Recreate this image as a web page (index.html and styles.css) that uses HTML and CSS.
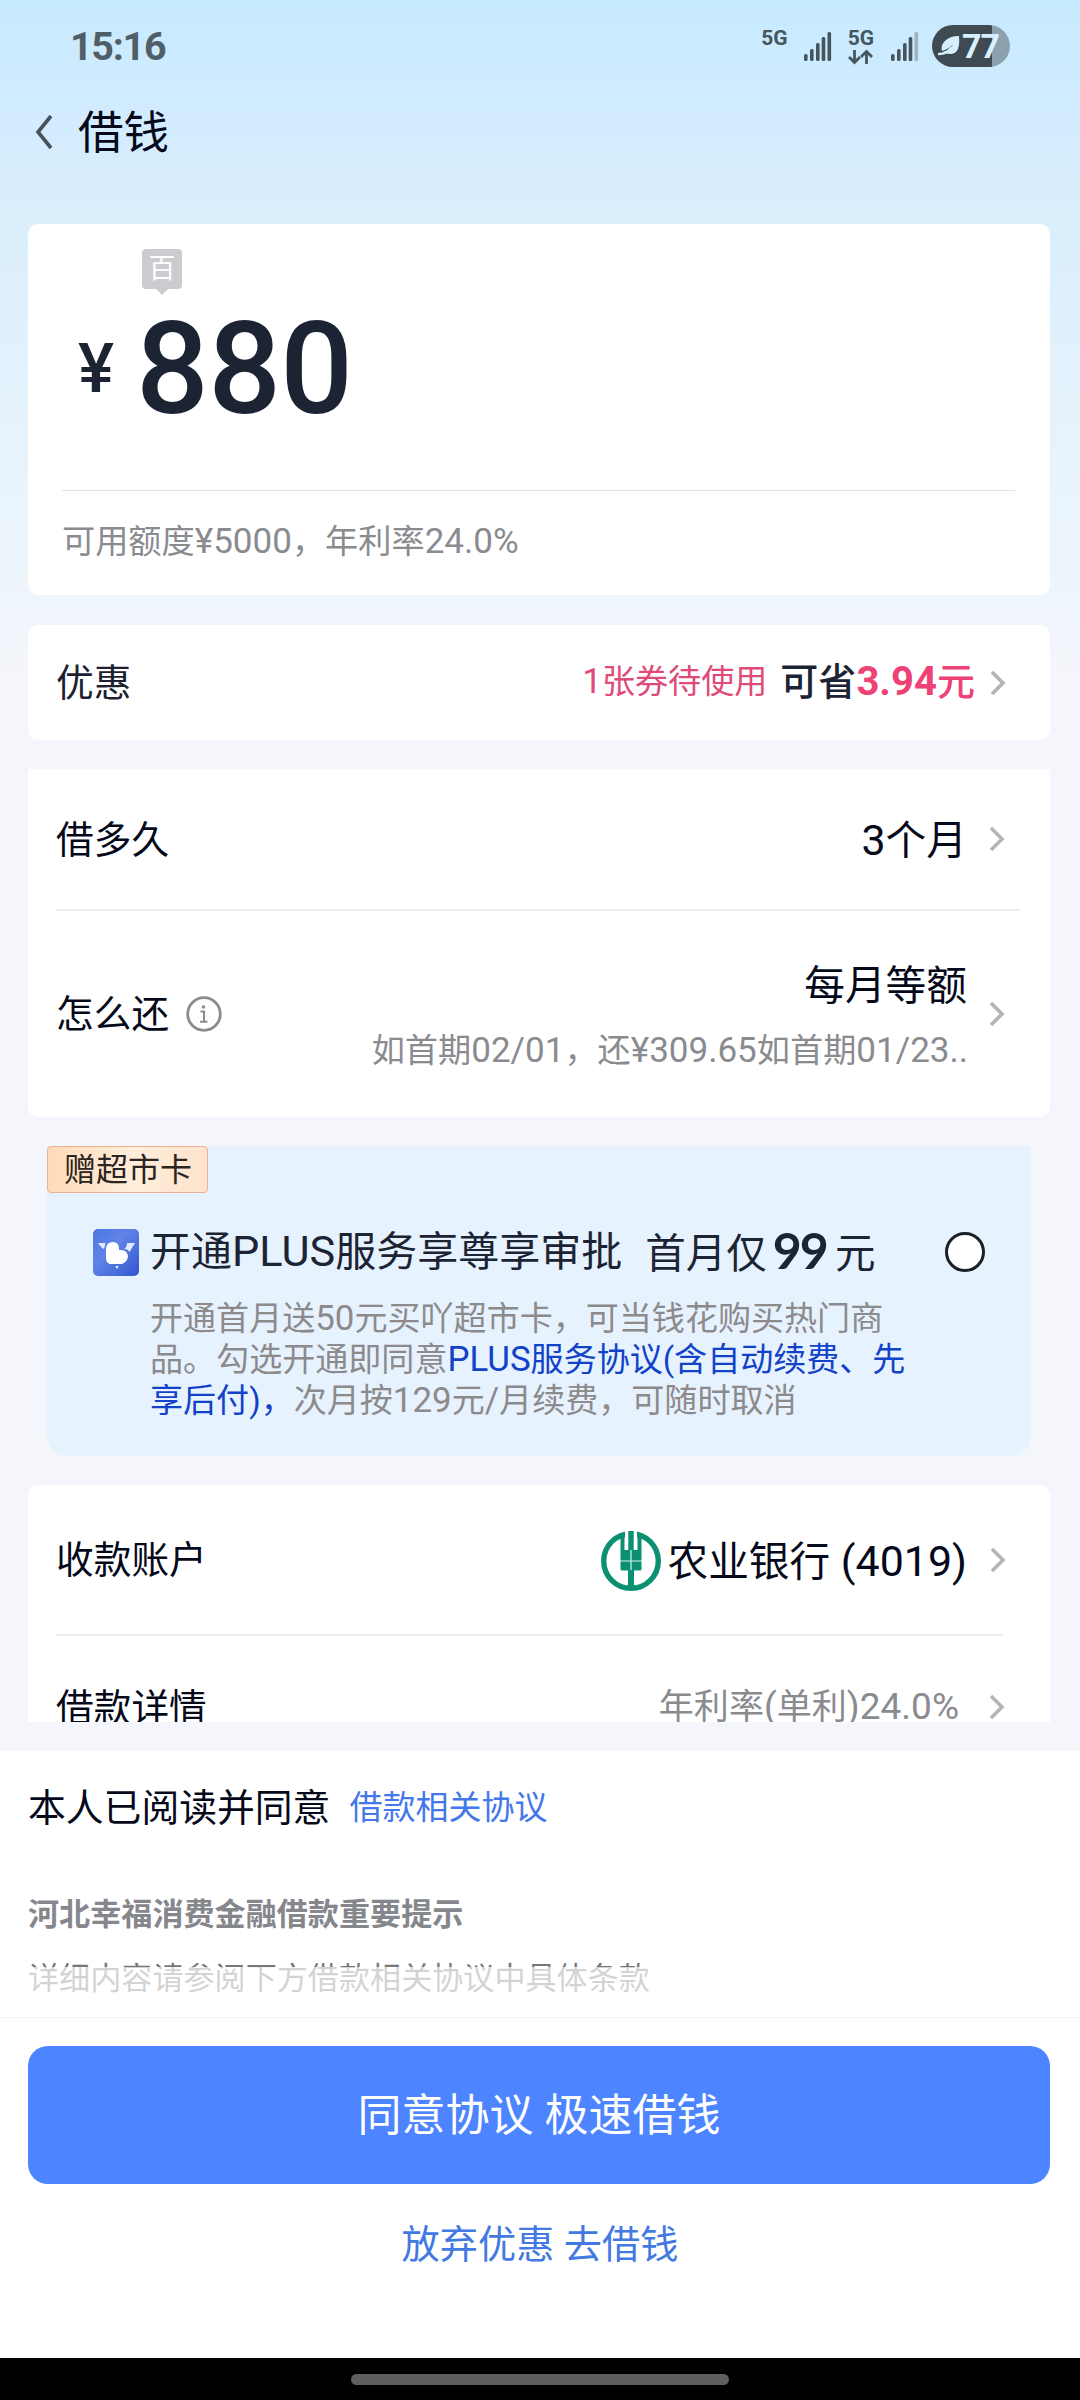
FILE: index.html
```html
<!DOCTYPE html>
<html lang="zh-CN">
<head>
<meta charset="utf-8">
<title>借钱</title>
<link rel="stylesheet" href="styles.css">
</head>
<body>
<svg class="defs" width="0" height="0" aria-hidden="true">
  <symbol id="chevron" viewBox="0 0 16 28"><path d="M2 3 L13 14 L2 25" fill="none" stroke="#b5b5b8" stroke-width="3.6"/></symbol>
</svg>

<div class="status">
  <span class="time">15:16</span>
  <div class="status-icons">
    <span class="net">5G</span>
    <svg class="signal" width="28" height="32" viewBox="0 0 28 32" fill="#46565f"><rect x="0" y="23" width="3.6" height="7" rx="1.5"/><rect x="6" y="18" width="3.6" height="12" rx="1.5"/><rect x="12" y="12" width="3.6" height="18" rx="1.5"/><rect x="17.700" y="6" width="3.600" height="24" rx="1.500"/><rect x="23.500" y="1" width="3.600" height="29" rx="1.500"/></svg>
    <div class="net-data">
      <span class="net">5G</span>
      <svg width="26" height="16" viewBox="0 0 26 16" fill="none" stroke="#46565f" stroke-width="2.800"><path d="M6.500 1 V13 M1 8 L6.500 13.500 L12 8"/><path d="M18.500 15 V3 M13 8 L18.500 2.500 L24 8"/></svg>
    </div>
    <svg class="signal" width="28" height="32" viewBox="0 0 28 32" fill="#46565f"><rect x="0" y="23" width="3.6" height="7" rx="1.5"/><rect x="6" y="18" width="3.6" height="12" rx="1.5"/><rect x="12" y="12" width="3.6" height="18" rx="1.5"/><rect x="17.700" y="6" width="3.600" height="24" rx="1.500"/><rect x="23.500" y="1" width="3.600" height="29" rx="1.500" fill="#9fb4c0"/></svg>
    <div class="battery">
      <svg width="22" height="22" viewBox="0 0 22 22"><path d="M21 1 C22 12 20 19 12 19 C9 19 7 18 5 17 C10 16 13 13 15 10 C11 13 8 15 4 16 C2 9 8 1 21 1Z" fill="#d5effd"/><path d="M1 19 C5 19 10 17 13 13" fill="none" stroke="#d5effd" stroke-width="2.600" stroke-linecap="round"/></svg>
      <span>77</span>
    </div>
  </div>
</div>

<header class="nav">
  <svg width="18" height="36" viewBox="0 0 18 36"><path d="M16 2 L3 18 L16 34" fill="none" stroke="#47525f" stroke-width="3.600"/></svg>
  <h1>借钱</h1>
</header>

<main class="scroll">
  <section class="card amount">
    <div class="unit">百</div>
    <div class="sum"><span class="yen">¥</span><span class="digits">880</span></div>
    <p class="quota">可用额度<span class="n">¥5000</span>，年利率<span class="n">24.0%</span></p>
  </section>

  <section class="card row coupon">
    <span class="label">优惠</span>
    <span class="coupon-count"><span class="n">1</span>张券待使用</span>
    <span class="coupon-save">可省<em><span class="n">3.94</span>元</em></span>
    <svg class="chev"><use href="#chevron"/></svg>
  </section>

  <section class="card plan">
    <div class="row term">
      <span class="label">借多久</span>
      <span class="value"><span class="n">3</span>个月</span>
      <svg class="chev"><use href="#chevron"/></svg>
    </div>
    <div class="row repay">
      <span class="label">怎么还</span>
      <svg class="info" width="36" height="36" viewBox="0 0 36 36"><circle cx="18" cy="18" r="16.300" fill="none" stroke="#8b8c90" stroke-width="2.800"/><circle cx="17.500" cy="11" r="1.800" fill="#8b8c90"/><path d="M14.500 15.500 H18 V25.500 M14 25.800 H21.500" fill="none" stroke="#8b8c90" stroke-width="2"/></svg>
      <div class="value-stack">
        <span class="value">每月等额</span>
        <span class="sub">如首期<span class="n">02/01</span>，还<span class="n">¥309.65</span>如首期<span class="n">01/23..</span></span>
      </div>
      <svg class="chev"><use href="#chevron"/></svg>
    </div>
  </section>

  <section class="plus">
    <span class="tag">赠超市卡</span>
    <div class="plus-head">
      <svg width="46" height="47" viewBox="0 0 46 47"><defs><linearGradient id="pg" x1="0" y1="0" x2="1" y2="1"><stop offset="0" stop-color="#4a76e4"/><stop offset=".4" stop-color="#6183e6"/><stop offset="1" stop-color="#3157cf"/></linearGradient></defs><rect width="46" height="47" rx="5" fill="url(#pg)"/><path d="M5 14 H12.500 L11 20 L9 19Z M31 20 Q34 18 34 14 H42 L36.500 23 Q35 20 31 20Z" fill="#dfe9ff"/><path d="M13 19 Q14 13 20 13 Q25.500 13 26 19 V21 Q34 20 35 27 Q35 32 29 35 H17 Q13 34 13 29Z" fill="#fff"/><path d="M22.500 37 H25.500 L24 40Z" fill="#fff"/></svg>
      <span class="plus-title">开通<span class="n">PLUS</span>服务享尊享审批</span>
      <span class="plus-price">首月仅<b>99</b>元</span>
      <span class="radio"></span>
    </div>
    <p class="plus-desc">开通首月送<span class="n">50</span>元买吖超市卡，可当钱花购买热门商<br>品。勾选开通即同意<a><span class="n">PLUS</span>服务协议(含自动续费、先<br>享后付)，</a>次月按<span class="n">129</span>元<span class="n">/</span>月续费，可随时取消</p>
  </section>

  <section class="card account">
    <div class="row bank">
      <span class="label">收款账户</span>
      <svg class="bank-logo" width="60" height="60" viewBox="0 0 60 60"><circle cx="30" cy="30" r="27.300" fill="none" stroke="#0b9172" stroke-width="5.400"/><path d="M24 0 H36 V12 H24Z" fill="#fff"/><path d="M19.500 5 L23.500 3 V19 H27.300 V0 H32.700 V19 H36.500 V3 L40.500 5 V38 Q40.500 39.500 39 39.500 H33 V54 L37 57 H23 L27 54 V39.500 H21 Q19.500 39.500 19.500 38Z" fill="#0b9172"/><path d="M30 19 V39 M19 30 H41" stroke="#d8f5ec" stroke-width="1.200"/></svg>
      <span class="value">农业银行<span class="n"> (4019)</span></span>
      <svg class="chev"><use href="#chevron"/></svg>
    </div>
    <div class="row detail">
      <span class="label">借款详情</span>
      <span class="rate">年利率<span class="n">(</span>单利<span class="n">)24.0%</span></span>
      <svg class="chev"><use href="#chevron"/></svg>
    </div>
  </section>
</main>

<footer class="footer">
  <p class="agree">本人已阅读并同意<a>借款相关协议</a></p>
  <div class="notice">
    <h2>河北幸福消费金融借款重要提示</h2>
    <p>详细内容请参阅下方借款相关协议中具体条款</p>
  </div>
  <button class="primary">同意协议 极速借钱</button>
  <a class="secondary">放弃优惠 去借钱</a>
</footer>
<div class="homebar"><span></span></div>
</body>
</html>
```
FILE: styles.css
```css
* { box-sizing: border-box; margin: 0; padding: 0; }
body {
  width: 1080px; height: 2400px; overflow: hidden;
  display: flex; flex-direction: column;
  font-family: Roboto, "Noto Sans CJK SC", sans-serif;
  color: #05091a;
  background: linear-gradient(#c6eaff 0, #d0ebff 90px, #daeefc 210px, #e7f3fc 450px, #eef5fb 600px, #f5f6fb 680px);
}
.defs { display: block; }
.n { font-size: 1.055em; }

.status { height: 92px; display: flex; justify-content: space-between; align-items: flex-start; padding: 0 70px 0 70px; }
.time { font-size: 39.500px; font-weight: 700; line-height: 40px; margin-top: 27px; letter-spacing: -1.300px; color: #505f67; }
.status-icons { display: flex; align-items: flex-start; padding-top: 25px; }
.net { display: block; font-size: 21px; font-weight: 700; line-height: 20px; color: #46565f; }
.status-icons > .net { margin: 3px 16px 0 0; }
.signal { margin-top: 6px; }
.net-data { display: flex; flex-direction: column; margin: 3px 17px 0 16px; }
.net-data svg { margin-top: 1px; }
.battery {
  display: flex; align-items: center; width: 78px; height: 42px; margin-left: 13px; padding-left: 6px;
  border-radius: 21px; background: linear-gradient(90deg, #3f4a52 59.500px, #8ba1af 59.500px);
}
.battery svg { flex: none; }
.battery span { font-size: 34px; font-weight: 700; line-height: 42px; letter-spacing: -1px; margin-left: 2px; color: #d9f1fe; }

.nav { height: 86px; display: flex; align-items: center; padding: 0 0 7px 35px; }
.nav h1 { font-size: 45.500px; font-weight: 400; line-height: 60px; margin: 5px 0 0 25px; }

.scroll { height: 1573px; padding: 46px 30px 0 28px; display: flex; flex-direction: column; }
.card { background: #fff; border-radius: 10px; flex: none; }
.amount { height: 371px; margin-bottom: 30px; padding: 25px 35px 0 34px; color: #1c2433; }
.unit {
  position: relative; width: 40px; height: 40px; margin-left: 80px; border-radius: 4px; background: #cbcbd0;
  color: #fff; font-size: 27px; line-height: 40px; text-align: center;
}
.unit::after {
  content: ""; position: absolute; left: 14px; top: 40px; border: 6px solid transparent; border-top-color: #cbcbd0; border-bottom: 0;
}
.sum { display: flex; align-items: center; height: 160px; margin-bottom: 41px; padding-left: 16px; font-weight: 500; }
.yen { width: 58px; font-size: 68px; line-height: 80px; }
.digits { font-size: 128px; line-height: 130px; letter-spacing: -.6px; margin-top: -1px; }
.quota { border-top: 1px solid #e2e2e4; height: 104px; line-height: 101px; font-size: 33.200px; color: #8a8b8f; }

.row { display: flex; align-items: center; padding: 0 45px 0 28px; }
.label { font-size: 37.700px; line-height: 50px; padding-top: 1px; white-space: nowrap; }
.chev { width: 16px; height: 28px; flex: none; }
.coupon { height: 115px; margin-bottom: 29px; padding-right: 44px; }
.coupon .label { color: #1c2030; padding: 0; }
.coupon-count { margin-left: auto; font-size: 33.100px; line-height: 50px; padding-bottom: 2px; color: #e04a78; }
.coupon-save { margin: 0 15px 0 13px; font-size: 38px; line-height: 50px; padding-bottom: 2px; font-weight: 500; color: #1c2433; }
.coupon-save em { font-style: normal; color: #ee4277; }
.coupon-save .n { font-weight: 700; }

.plan { height: 348px; margin-bottom: 29px; border-radius: 0 0 10px 10px; }
.term { height: 140px; }
.term .value { margin-left: auto; padding-top: 2px; }
.value { font-size: 40.700px; line-height: 54px; white-space: nowrap; margin-right: 22px; }
.repay { position: relative; height: 209px; }
.repay::before, .detail::before { content: ""; position: absolute; left: 28px; right: 30px; top: 0; height: 2px; background: #ececee; }
.info { margin-left: 17px; }
.value-stack { margin-left: auto; padding-top: 8px; display: flex; flex-direction: column; align-items: flex-end; gap: 12px; }
.sub { font-size: 33.200px; line-height: 52px; color: #8a8b8f; margin-right: 21px; white-space: nowrap; }

.plus { flex: none; width: 984px; height: 310px; margin: 0 0 29px 19px; background: #e7f2ff; border-radius: 0 0 20px 20px; }
.tag {
  display: block; width: 161px; height: 47px; padding-left: 16px; border: 1.500px solid #e9b290; border-radius: 4px;
  background: linear-gradient(90deg, #ffdab8, #ffeedb 55%, #ffe2cb); font-size: 32px; line-height: 46px; color: #2a2522;
}
.plus-head { display: flex; align-items: center; height: 60px; margin-top: 29px; padding: 0 46px; color: #1c2433; }
.plus-title { margin-left: 11px; font-size: 41px; line-height: 50px; white-space: nowrap; }
.plus-price { margin-left: 23px; padding-bottom: 2px; font-size: 40.500px; line-height: 50px; white-space: nowrap; }
.plus-price b { font: 700 50px/50px Lato, sans-serif; letter-spacing: -1.800px; margin: 0 8px 0 6px; position: relative; top: 1px; }
.radio { width: 40px; height: 40px; margin-left: auto; border: 3px solid #1c1f26; border-radius: 50%; background: #fff; }
.plus-desc { margin: 16px 0 0 103px; font-size: 33.050px; line-height: 41px; color: #8c8a8b; white-space: nowrap; }
.plus-desc a { color: #1142c8; }

.account { height: 237px; overflow: hidden; border-radius: 10px 10px 0 0; }
.bank { height: 149px; padding-right: 44px; }
.bank-logo { margin: 3px 6px 0 auto; }
.bank .value { margin: 4px 23px 0 0; }
.detail { position: relative; height: 146px; }
.detail::before { right: 47px; }
.rate { margin: 0 30px 0 auto; padding-bottom: 1px; font-size: 35.100px; line-height: 50px; color: #8a8b8f; white-space: nowrap; }

.footer { height: 607px; background: #fff; display: flex; flex-direction: column; }
.agree { height: 112px; display: flex; align-items: center; padding: 1px 0 0 28px; font-size: 37.800px; line-height: 54px; }
.agree a { margin-left: 19px; font-size: 33px; color: #4478ea; }
.notice { position: relative; height: 155px; padding: 29px 0 0 28px; font-size: 31.100px; line-height: 46px; color: #85878c; border-bottom: 1px solid #f3f3f3; }
.notice h2 { font-size: inherit; font-weight: 700; }
.notice p { margin-top: 18px; color: #77787c; }
.notice::after { content: ""; position: absolute; left: 0; right: 0; top: 104px; height: 50px; background: rgba(255,255,255,.68); }
.primary { width: 1022px; height: 138px; margin: 28px 0 0 28px; padding-top: 2px; border: 0; border-radius: 20px; background: #4d84ff; color: #fff; font: 400 44px/60px Roboto, "Noto Sans CJK SC", sans-serif; }
.secondary { align-self: center; margin-top: 31px; font-size: 38.200px; line-height: 60px; color: #4379e2; }
.homebar { height: 42px; background: #000; display: flex; justify-content: center; padding-top: 16px; }
.homebar span { width: 378px; height: 11px; border-radius: 6px; background: #5f5f5f; }
```
